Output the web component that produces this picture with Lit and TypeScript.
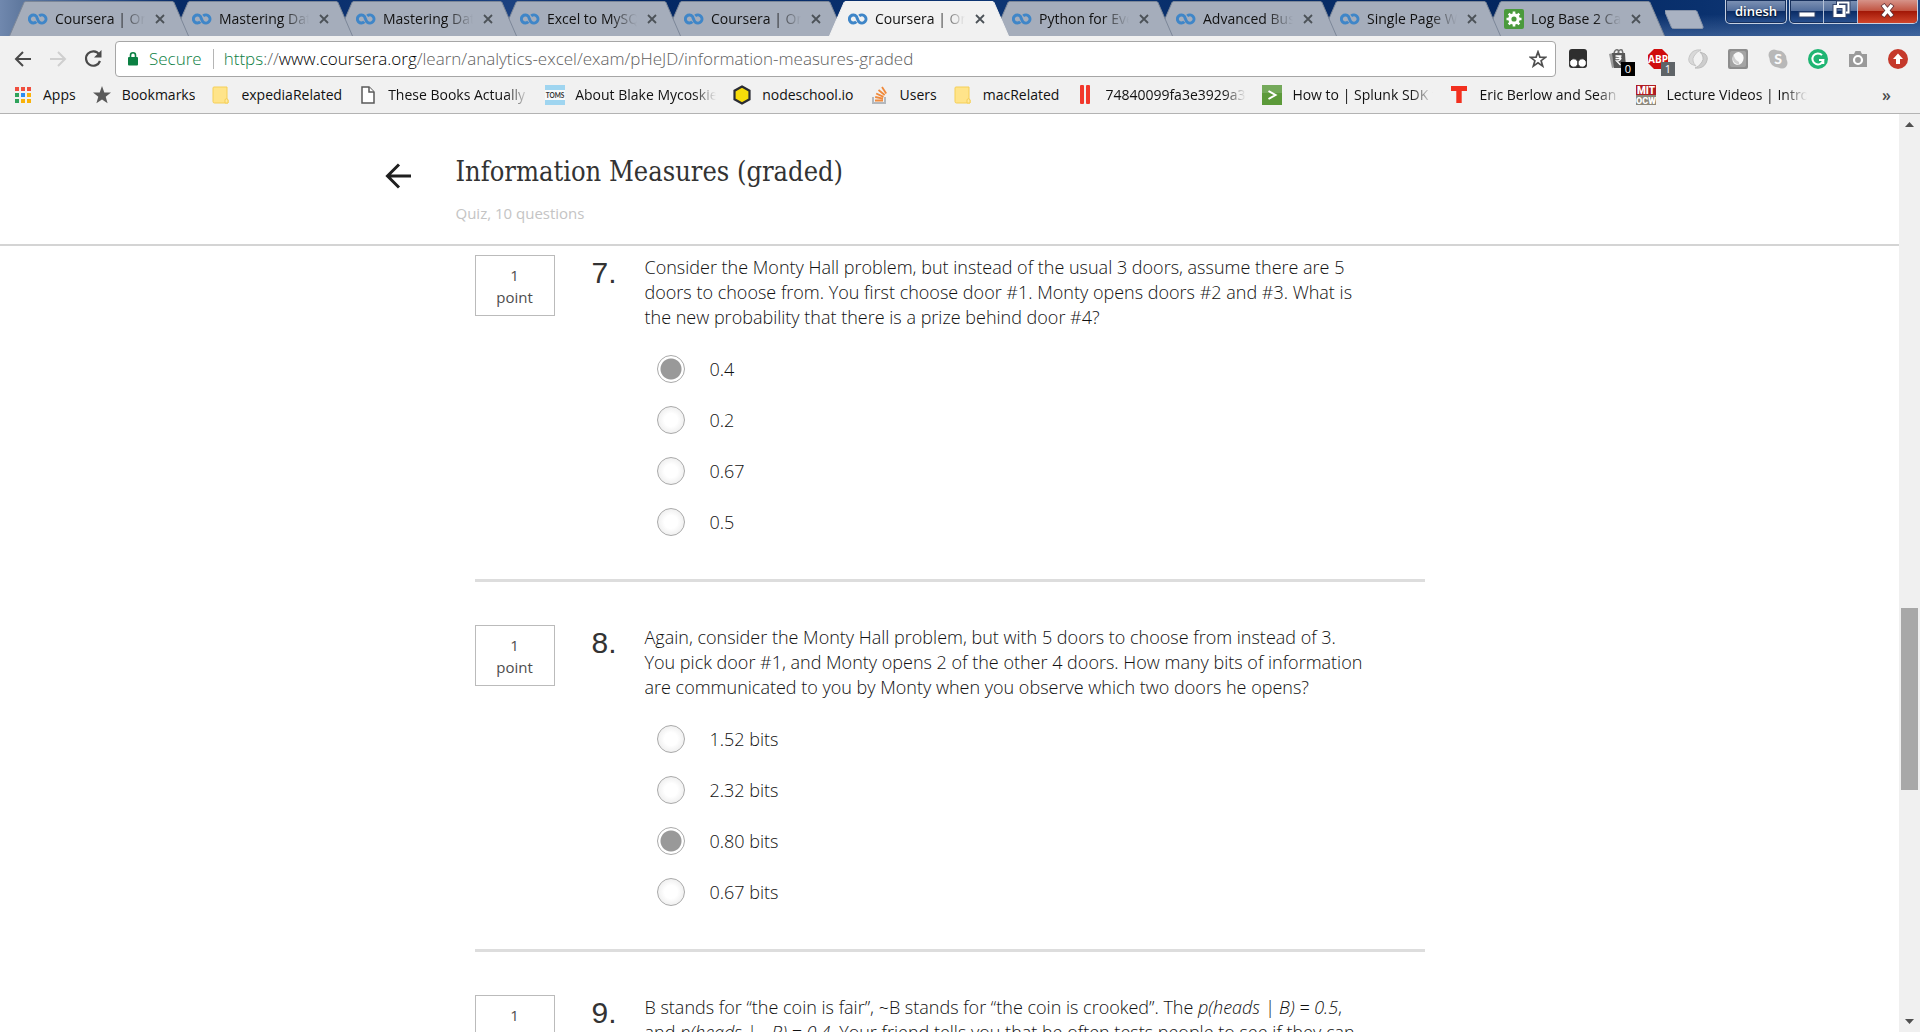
import { LitElement, html, svg, css, nothing, TemplateResult } from "lit";
import { customElement, property } from "lit/decorators.js";
import { classMap } from "lit/directives/class-map.js";

type Glyph = TemplateResult;

const infinity: Glyph = html`<svg width="20" height="20" viewBox="0 0 20 20" fill="none" stroke="#3f86c8" stroke-width="3">
  <path d="M11.2 6.9 A4.1 4.1 0 1 1 11.2 13.1 C9.8 11.9 9.4 9.4 8.4 7.4 A4 4 0 1 0 8.3 12.7" />
</svg>`;

const gear: Glyph = html`<svg width="20" height="20" viewBox="0 0 20 20">
  <rect width="20" height="20" rx="2" fill="#4a9a3c" />
  <circle cx="10" cy="10" r="4.200" fill="none" stroke="#fff" stroke-width="3.200" />
  <path d="M10 2.500v3M10 14.500v3M2.500 10h3M14.500 10h3M4.700 4.700l2 2M13.300 13.300l2 2M15.300 4.700l-2 2M6.700 13.300l-2 2" stroke="#fff" stroke-width="2.600" />
</svg>`;

const folder: Glyph = html`<svg width="20" height="20" viewBox="0 0 20 20">
  <path d="M3 2h13v12l1 1v3H3.500q-1.500 0-1.500-1.500V3q0-1 1-1z" fill="#ffe48a" stroke="#f5cf57" />
  <path d="M14 18v-3.500q1.500-1.500 3 0V18z" fill="#ffe9a2" stroke="#f5cf57" />
</svg>`;

const appColours = ["#f04e3e", "#f04e3e", "#f04e3e", "#2fa35b", "#2b8cf0", "#f9b20a", "#2fa35b", "#f9b20a", "#f9b20a"];

const bookmarks: { text: string; icon: Glyph }[] = [
  {
    text: "Apps",
    icon: html`<svg width="20" height="20" viewBox="0 0 20 20">
      ${appColours.map((c, i) => svg`<rect x=${2 + (i % 3) * 6} y=${2 + Math.floor(i / 3) * 6} width="4" height="4" fill=${c} />`)}
    </svg>`,
  },
  {
    text: "Bookmarks",
    icon: html`<svg width="20" height="20" viewBox="0 0 20 20"><path fill="#5a5a5a" d="M10 1l2.300 6.400 6.700.2-5.300 4.100 1.900 6.500L10 14.400l-5.600 3.800 1.900-6.500L1 7.600l6.700-.2z" /></svg>`,
  },
  { text: "expediaRelated", icon: folder },
  {
    text: "These Books Actually Changed",
    icon: html`<svg width="20" height="20" viewBox="0 0 20 20" fill="#fff" stroke="#5a5a5a" stroke-width="1.500"><path d="M4 2h7l5 5v11H4z" /><path d="M11 2v5h5" /></svg>`,
  },
  {
    text: "About Blake Mycoskie | TOMS",
    icon: html`<svg width="20" height="20" viewBox="0 0 20 20"><rect width="20" height="20" fill="#9fd5f0" /><rect y="5" width="20" height="10" fill="#f7fafb" /><text x="10" y="12.500" font-family="Lato, sans-serif" font-size="6.500" font-weight="700" text-anchor="middle" fill="#333">TOMS</text></svg>`,
  },
  {
    text: "nodeschool.io",
    icon: html`<svg width="20" height="20" viewBox="0 0 20 20"><path d="M10 1.500l7.500 4.250v8.500L10 18.500l-7.500-4.250v-8.500z" fill="#f7dc0a" stroke="#2a2c33" stroke-width="2.200" /></svg>`,
  },
  {
    text: "Users",
    icon: html`<svg width="20" height="20" viewBox="0 0 20 20" fill="none"><path d="M3 12v6h12v-6" stroke="#b4b8bd" stroke-width="2" /><g stroke="#f08a3c" stroke-width="1.800"><path d="M5 15.500h8M5.200 12l7.800 1.700M6.200 8.500l7.300 3.400M8.500 5l6.200 5M12 2l4.200 6.500" /></g></svg>`,
  },
  { text: "macRelated", icon: folder },
  {
    text: "74840099fa3e3929a3b4",
    icon: html`<svg width="20" height="20" viewBox="0 0 20 20" fill="#f2382c"><rect x="5" y="0" width="4" height="19" rx="1" /><rect x="11" y="0" width="4" height="19" rx="1" /></svg>`,
  },
  {
    text: "How to | Splunk SDK for",
    icon: html`<svg width="20" height="20" viewBox="0 0 20 20"><rect width="20" height="20" fill="#5c9a3a" /><rect width="20" height="8" fill="#74a95a" /><path d="M6.500 6l7 4-7 4" fill="none" stroke="#fff" stroke-width="2" /></svg>`,
  },
  {
    text: "Eric Berlow and Sean Gourley",
    icon: html`<svg width="20" height="20" viewBox="0 0 20 20"><path d="M2 1h16v5h-5.300v12H7.300V6H2z" fill="#f2301f" /></svg>`,
  },
  {
    text: "Lecture Videos | Introduction",
    icon: html`<svg width="20" height="20" viewBox="0 0 20 20" font-family="Roboto, sans-serif" font-weight="900" fill="#fff" text-anchor="middle"><rect width="20" height="10" fill="#b01c22" /><rect y="10" width="20" height="10" fill="#8c877b" /><text x="10" y="8.500" font-size="10">MIT</text><text x="10" y="18.500" font-size="9">OCW</text></svg>`,
  },
];

const tabs = [
  { text: "Coursera | Online", icon: infinity },
  { text: "Mastering Data", icon: infinity },
  { text: "Mastering Data", icon: infinity },
  { text: "Excel to MySQL", icon: infinity },
  { text: "Coursera | Online", icon: infinity },
  { text: "Coursera | Online", icon: infinity, active: true },
  { text: "Python for Everybody", icon: infinity },
  { text: "Advanced Business", icon: infinity },
  { text: "Single Page Web", icon: infinity },
  { text: "Log Base 2 Calculator", icon: gear },
];

const extensions: { name: string; icon: Glyph; badge?: string; dark?: boolean }[] = [
  {
    name: "Tampermonkey",
    icon: html`<svg width="20" height="20" viewBox="0 0 20 20"><rect x="1" y="0" width="18" height="19" rx="3" fill="#2e2e2e" /><circle cx="5.800" cy="14" r="4.200" fill="#fff" stroke="#2e2e2e" /><circle cx="14.200" cy="14" r="4.200" fill="#fff" stroke="#2e2e2e" /></svg>`,
  },
  {
    name: "Shopping",
    badge: "0",
    dark: true,
    icon: html`<svg width="20" height="20" viewBox="0 0 20 20"><path d="M1 5l4-1 3 14-4 1z" fill="#9a9a9a" /><path d="M4 4h13l1 15H6z" fill="#585858" /><path d="M6 4q1-4 4-3l1 3M10 4q1-4 4-3l1 3" fill="none" stroke="#6f6f6f" stroke-width="1.500" /><path d="M7.500 7h6M7.500 9.500h6M8.500 7q4 0 4 2.500T8.500 12l4 4" fill="none" stroke="#fff" stroke-width="1.300" /></svg>`,
  },
  {
    name: "Adblock Plus",
    badge: "1",
    icon: html`<svg width="20" height="20" viewBox="0 0 20 20"><path d="M6 0h8l6 6v8l-6 6H6l-6-6V6z" fill="#cf0d0d" /><text x="10" y="13.500" font-family="Open Sans, sans-serif" font-size="10" font-weight="700" text-anchor="middle" fill="#fff">ABP</text></svg>`,
  },
  {
    name: "Swirl",
    icon: html`<svg width="20" height="20" viewBox="0 0 20 20"><path d="M13 1Q5 0 2 6t1 9l5 2Q3 12 6 7t7-6z" fill="#d8d8d8" stroke="#c6c6c6" /><path d="M7 19q8 1 11-5t-1-9l-5-2q5 5 2 10t-7 6z" fill="#cdcdcd" stroke="#bcbcbc" /></svg>`,
  },
  {
    name: "Dictionary",
    icon: html`<svg width="20" height="20" viewBox="0 0 20 20"><rect width="20" height="20" rx="2" fill="#8d8d8d" /><rect x="2" y="2" width="16" height="16" rx="2" fill="#a4a4a4" /><ellipse cx="10" cy="9.500" rx="5.500" ry="6.500" transform="rotate(20 10 9.500)" fill="#f8f8f8" /><path d="M5.500 5q-2 5 1 8.500l4 2.500q1-2 .5-3Q6 10 5.500 5z" fill="#cfcfcf" /></svg>`,
  },
  {
    name: "Skype",
    icon: html`<svg width="20" height="20" viewBox="0 0 20 20"><circle cx="10" cy="10" r="8.500" fill="#b8b8b8" /><circle cx="6" cy="6" r="5.500" fill="#b8b8b8" /><circle cx="14" cy="14" r="5.500" fill="#b8b8b8" /><text x="10" y="15" font-family="Lato, sans-serif" font-size="14" font-weight="900" text-anchor="middle" fill="#fafafa">S</text></svg>`,
  },
  {
    name: "Grammarly",
    icon: html`<svg width="20" height="20" viewBox="0 0 20 20" fill="none" stroke="#fff" stroke-width="2"><circle cx="10" cy="10" r="10" fill="#1fb573" stroke="none" /><path d="M14 6.200A5.500 5.500 0 1 0 15.300 11h-4.300M15.300 10.500v4.500" /></svg>`,
  },
  {
    name: "Camera",
    icon: html`<svg width="20" height="20" viewBox="0 0 20 20"><path d="M1 5h5l1.500-3h5L14 5h5v13H1z" fill="#9a9a9a" /><circle cx="10" cy="11" r="4" fill="#9a9a9a" stroke="#fff" stroke-width="2.200" /></svg>`,
  },
  {
    name: "Update Chrome",
    icon: html`<svg width="20" height="20" viewBox="0 0 20 20"><circle cx="10" cy="10" r="10" fill="#c5392b" /><path d="M10 4.500l5 5.500h-3v5H8v-5H5z" fill="#fff" /></svg>`,
  },
];

interface Question {
  n: number;
  text: TemplateResult | string;
  options: string[];
  picked: number;
}

const questions: Question[] = [
  {
    n: 7,
    text: "Consider the Monty Hall problem, but instead of the usual 3 doors, assume there are 5 doors to choose from. You first choose door #1. Monty opens doors #2 and #3. What is the new probability that there is a prize behind door #4?",
    options: ["0.4", "0.2", "0.67", "0.5"],
    picked: 0,
  },
  {
    n: 8,
    text: "Again, consider the Monty Hall problem, but with 5 doors to choose from instead of 3. You pick door #1, and Monty opens 2 of the other 4 doors. How many bits of information are communicated to you by Monty when you observe which two doors he opens?",
    options: ["1.52 bits", "2.32 bits", "0.80 bits", "0.67 bits"],
    picked: 2,
  },
  {
    n: 9,
    text: html`B stands for “the coin is fair”, ~B stands for “the coin is crooked”. The <em>p(heads | B) = 0.5</em>, and <em>p(heads | ~B) = 0.4.</em> Your friend tells you that he often tests people to see if they can`,
    options: [],
    picked: -1,
  },
];

@customElement("browser-tabs")
export class BrowserTabs extends LitElement {
  static styles = css`
    :host {
      display: flex;
      justify-content: space-between;
      height: 36px;
      background:
        linear-gradient(180deg, transparent 40%, rgba(130, 160, 205, 0.35)) right / 300px 100% no-repeat,
        linear-gradient(90deg, #7088ae 0, #60799f 20px, #2a4c86 110px, #062a66 180px, #0a2f6d 320px, #1b4180 510px, #032763 640px, #0d3573 1000px, #03265f 1500px, #0a316e 1700px, #1c4685);
    }
    button {
      font: inherit;
      border: 0;
      padding: 0;
      background: none;
    }
    .tabs {
      display: flex;
      padding: 1px 0 0 9px;
    }
    .tab {
      position: relative;
      display: flex;
      align-items: center;
      box-sizing: border-box;
      width: 180px;
      height: 35px;
      padding: 0 24px 0 19px;
      font: 14px/20px "Open Sans", sans-serif;
      color: #111;
    }
    .tab + .tab {
      margin-left: -16px;
    }
    .shape {
      position: absolute;
      inset: 0;
      width: 100%;
      height: 100%;
      fill: #a5adbb;
      stroke: #7c8798;
    }
    .active .shape {
      fill: #f1f1f1;
      stroke: #f1f1f1;
    }
    .icon,
    .text,
    .close {
      position: relative;
      display: flex;
    }
    .text {
      display: block;
      flex: 1;
      margin: 0 10px 0 7px;
      white-space: nowrap;
      overflow: hidden;
      mask-image: linear-gradient(90deg, #000 70%, transparent);
    }
    .new {
      width: 40px;
      height: 36px;
    }
    .window {
      display: flex;
      gap: 2px;
      padding-right: 2px;
    }
    .frame {
      display: flex;
      box-sizing: border-box;
      height: 24px;
      border: 1px solid #c5d0e2;
      border-top: 0;
      border-radius: 0 0 5px 5px;
      box-shadow: inset 0 0 0 1px #17305c;
      overflow: hidden;
      background: linear-gradient(#7f93b5, #4f6b9a 50%, #0a2c66 50%, #2a5291);
    }
    .user {
      padding: 0 9px;
      font: 600 13px/22px "Open Sans", sans-serif;
      color: #fff;
      text-shadow: 0 1px 2px #000;
    }
    .ctl {
      width: 34px;
      border-right: 1px solid #b4c1d6;
    }
    .quit {
      width: 59px;
      border: 0;
      background: linear-gradient(#d69389, #c0503d 50%, #a31807 50%, #d0452b);
    }
  `;

  render() {
    return html`
      <div class="tabs" role="tablist">
        ${tabs.map(
          (t, i) => html`<div class=${classMap({ tab: true, active: !!t.active })} role="tab" style="z-index:${t.active ? 30 : 20 - i}">
            <svg class="shape" viewBox="0 0 180 35" preserveAspectRatio="none" aria-hidden="true">
              <path d="M.5 35L15 1.500Q15.500.5 17 .5H163Q164.500.5 165 1.500L179.500 35" />
            </svg>
            <span class="icon">${t.icon}</span>
            <span class="text">${t.text}</span>
            <button class="close" aria-label="Close tab">
              <svg width="10" height="10" viewBox="0 0 10 10" stroke="#4c5258" stroke-width="1.800"><path d="M1 1l8 8M9 1l-8 8" /></svg>
            </button>
          </div>`
        )}
        <button class="new" aria-label="New tab">
          <svg width="40" height="35" viewBox="0 0 40 35"><path d="M0 9.500h30q1.500 0 2 1l6 15q.5 2-1 2H8.500q-1.500 0-2-1L0 11z" fill="#a9b2c2" stroke="#8793a8" /></svg>
        </button>
      </div>
      <div class="window">
        <button class="frame user">dinesh</button>
        <div class="frame">
          <button class="ctl" aria-label="Minimize">
            <svg width="18" height="20" viewBox="0 0 18 20"><rect x="1" y="12" width="16" height="5" fill="#fff" stroke="#35456b" /></svg>
          </button>
          <button class="ctl" aria-label="Restore">
            <svg width="20" height="20" viewBox="0 0 20 20" fill="none"><path d="M7 5V2.500h10.500v10H15" stroke="#35456b" stroke-width="4" /><rect x="4" y="6.500" width="9" height="9" stroke="#35456b" stroke-width="5" /><path d="M7 5V2.500h10.500v10H15" stroke="#fff" stroke-width="2" /><rect x="4" y="6.500" width="9" height="9" stroke="#fff" stroke-width="3" /></svg>
          </button>
          <button class="ctl quit" aria-label="Close window">
            <svg width="18" height="20" viewBox="0 0 18 20"><path d="M3.500 4.500l10 12M13.500 4.500l-10 12" stroke="#5c2d33" stroke-width="5" /><path d="M4 5l9 11M13 5l-9 11" stroke="#fff" stroke-width="3.500" /></svg>
          </button>
        </div>
      </div>
    `;
  }
}

@customElement("browser-toolbar")
export class BrowserToolbar extends LitElement {
  static styles = css`
    :host {
      display: block;
      background: #f1f1f1;
      border-bottom: 1px solid #b3b3b3;
      font-family: "Open Sans", sans-serif;
      color: #111;
    }
    button {
      font: inherit;
      border: 0;
      padding: 0;
      background: none;
      color: inherit;
      display: flex;
    }
    .bar {
      display: flex;
      align-items: center;
      gap: 12px;
      padding: 5px 12px 0 13px;
    }
    .history {
      display: flex;
      gap: 15px;
    }
    .omni {
      flex: 1;
      display: flex;
      align-items: center;
      box-sizing: border-box;
      height: 36px;
      padding: 0 8px 0 11px;
      background: #fff;
      border: 1px solid #a6a6a6;
      border-radius: 4px;
      font-size: 17px;
      font-weight: 300;
      line-height: 24px;
    }
    .secure {
      color: #0b8043;
      padding: 0 11px 0 10px;
      border-right: 1px solid #b5b5b5;
      line-height: 20px;
    }
    .url {
      flex: 1;
      padding-left: 10px;
      color: #606060;
      white-space: nowrap;
      overflow: hidden;
    }
    .scheme {
      color: #0b8043;
    }
    .host {
      color: #000;
    }
    .ext {
      display: flex;
      gap: 20px;
    }
    .tool {
      position: relative;
    }
    .badge {
      position: absolute;
      left: 13px;
      top: 13px;
      width: 14px;
      height: 14px;
      background: #5f6468;
      color: #fff;
      font-size: 11px;
      line-height: 14px;
      text-align: center;
    }
    .dark {
      background: #000;
    }
    .marks {
      display: flex;
      gap: 16px;
      height: 36px;
      align-items: center;
      padding: 0 29px 0 13px;
      font-size: 14px;
      line-height: 20px;
    }
    .mark {
      display: flex;
      gap: 10px;
      color: inherit;
      text-decoration: none;
    }
    .label {
      max-width: 141px;
      white-space: nowrap;
      overflow: hidden;
    }
    .long {
      mask-image: linear-gradient(90deg, #000 84%, transparent);
    }
    .more {
      margin-left: auto;
      font-weight: 600;
      color: #4a4a4a;
      font-size: 16px;
    }
  `;

  render() {
    return html`
      <div class="bar">
        <div class="history">
          <button aria-label="Back"><svg width="20" height="20" viewBox="0 0 20 20" fill="none" stroke="#4a4a4a" stroke-width="2"><path d="M18 10H3M10 3l-7 7 7 7" /></svg></button>
          <button aria-label="Forward"><svg width="20" height="20" viewBox="0 0 20 20" fill="none" stroke="#cfcfcf" stroke-width="2"><path d="M2 10h15M10 3l7 7-7 7" /></svg></button>
          <button aria-label="Reload"><svg width="20" height="20" viewBox="0 0 20 20" fill="none" stroke="#4a4a4a" stroke-width="2.200"><path d="M16.200 5.500A7.200 7.200 0 1 0 17 12" /><path d="M18.500 1v7.500H11z" fill="#4a4a4a" stroke="none" /></svg></button>
        </div>
        <div class="omni">
          <svg width="12" height="16" viewBox="0 0 12 16"><rect x="1" y="6" width="10" height="8.500" rx="1" fill="#0b8043" /><path d="M3.500 7V4.200a2.500 2.500 0 0 1 5 0V7" fill="none" stroke="#0b8043" stroke-width="1.600" /></svg>
          <span class="secure">Secure</span>
          <span class="url"><span class="scheme">https</span>://<span class="host">www.coursera.org</span>/learn/analytics-excel/exam/pHeJD/information-measures-graded</span>
          <button aria-label="Bookmark this page"><svg width="18" height="18" viewBox="0 0 18 18" fill="none" stroke="#4f4f4f" stroke-width="1.700"><path d="M9 1.800l1.900 5.300 5.600.2-4.400 3.400 1.600 5.400L9 12.900l-4.700 3.200 1.600-5.400L1.500 7.300l5.600-.2z" /></svg></button>
        </div>
        <div class="ext">
          ${extensions.map(
            (e) => html`<button class="tool" aria-label=${e.name}>
              ${e.icon}${e.badge ? html`<span class=${classMap({ badge: true, dark: !!e.dark })}>${e.badge}</span>` : nothing}
            </button>`
          )}
        </div>
      </div>
      <nav class="marks">
        ${bookmarks.map(
          (b) => html`<a class="mark" href="#">${b.icon}<span class=${classMap({ label: true, long: b.text.length > 15 })}>${b.text}</span></a>`
        )}
        <button class="more" aria-label="More bookmarks">»</button>
      </nav>
    `;
  }
}

@customElement("quiz-question")
export class QuizQuestion extends LitElement {
  @property({ attribute: false }) q!: Question;

  static styles = css`
    :host {
      display: grid;
      grid-template-columns: 117px 53px 1fr;
      color: #333;
    }
    .points {
      box-sizing: border-box;
      width: 80px;
      height: 61px;
      padding-top: 8px;
      border: 1px solid #bbb;
      font-size: 15px;
      line-height: 22px;
      text-align: center;
      color: #4d4d4d;
    }
    .one {
      display: block;
    }
    .num {
      font: 30px/36px "Liberation Sans", sans-serif;
    }
    .body {
      padding-right: 56px;
      font-size: 18px;
      font-weight: 300;
      color: #111;
    }
    .text {
      margin: 0;
      line-height: 25px;
    }
    .options {
      margin: 0;
      padding: 25px 0 0 12px;
      border: 0;
      display: grid;
      gap: 24px;
    }
    .option {
      display: flex;
      align-items: center;
      gap: 25px;
      height: 27px;
    }
    input {
      appearance: none;
      box-sizing: border-box;
      width: 28px;
      height: 28px;
      margin: 0;
      border: 1px solid #aaa;
      border-radius: 50%;
      background: radial-gradient(closest-side, #fff 50%, #f0f0f0);
    }
    input:checked {
      background: radial-gradient(#999 10px, #fff 11px);
    }
  `;

  render() {
    const { n, text, options, picked } = this.q;
    return html`
      <div class="points"><span class="one">1</span>point</div>
      <div class="num">${n}.</div>
      <div class="body">
        <p class="text">${text}</p>
        ${options.length
          ? html`<fieldset class="options" aria-label="Question ${n}">
              ${options.map(
                (o, i) => html`<label class="option"><input type="radio" name="q${n}" .checked=${i === picked} />${o}</label>`
              )}
            </fieldset>`
          : nothing}
      </div>
    `;
  }
}

@customElement("page-scrollbar")
export class PageScrollbar extends LitElement {
  static styles = css`
    :host {
      display: flex;
      flex-direction: column;
      width: 21px;
      background: #f0f0f0;
    }
    button {
      display: flex;
      align-items: center;
      justify-content: center;
      height: 21px;
      padding: 0;
      border: 0;
      background: none;
    }
    .before {
      flex: 473;
    }
    .thumb {
      flex: 182;
      margin: 0 2px;
      background: #a8a8a8;
    }
    .after {
      flex: 221;
    }
  `;

  render() {
    return html`
      <button aria-label="Scroll up"><svg width="9" height="5" viewBox="0 0 9 5"><path d="M0 5L4.500 0 9 5z" fill="#505050" /></svg></button>
      <div class="before"></div>
      <div class="thumb"></div>
      <div class="after"></div>
      <button aria-label="Scroll down"><svg width="9" height="5" viewBox="0 0 9 5"><path d="M0 0l4.500 5L9 0z" fill="#505050" /></svg></button>
    `;
  }
}

@customElement("app-root")
export class AppRoot extends LitElement {
  static styles = css`
    :host {
      display: flex;
      flex-direction: column;
      height: 100vh;
      overflow: hidden;
      background: #fff;
      font-family: "Open Sans", sans-serif;
    }
    .view {
      flex: 1;
      min-height: 0;
      display: flex;
    }
    .page {
      flex: 1;
      min-width: 0;
      overflow: hidden;
    }
    .head {
      border-bottom: 2px solid #d4d4d4;
    }
    .inner {
      display: flex;
      gap: 43px;
      max-width: 1130px;
      margin: 0 auto;
      padding: 38px 0 20px;
    }
    .back {
      margin-top: 10px;
    }
    .title {
      margin: 0;
      font: 400 27px/40px "DejaVu Serif Condensed", "Liberation Serif", serif;
      color: #333;
    }
    .sub {
      margin: 10px 0 0;
      font-size: 15px;
      line-height: 22px;
      color: #c4c4c4;
    }
    .list {
      max-width: 950px;
      margin: 0 auto;
      padding-top: 9px;
    }
    .rule {
      height: 3px;
      margin: 44px 0 43px;
      border: 0;
      background: #ddd;
    }
  `;

  render() {
    return html`
      <browser-tabs></browser-tabs>
      <browser-toolbar></browser-toolbar>
      <div class="view">
        <main class="page">
          <header class="head">
            <div class="inner">
              <a class="back" href="#" aria-label="Back">
                <svg width="28" height="28" viewBox="0 0 28 28" fill="none" stroke="#1f1f1f" stroke-width="3"><path d="M26 14H3M14 2.500L2.500 14 14 25.500" /></svg>
              </a>
              <div>
                <h1 class="title">Information Measures (graded)</h1>
                <p class="sub">Quiz, 10 questions</p>
              </div>
            </div>
          </header>
          <div class="list">
            ${questions.map((q, i) => html`${i ? html`<hr class="rule" />` : nothing}<quiz-question .q=${q}></quiz-question>`)}
          </div>
        </main>
        <page-scrollbar></page-scrollbar>
      </div>
    `;
  }
}
